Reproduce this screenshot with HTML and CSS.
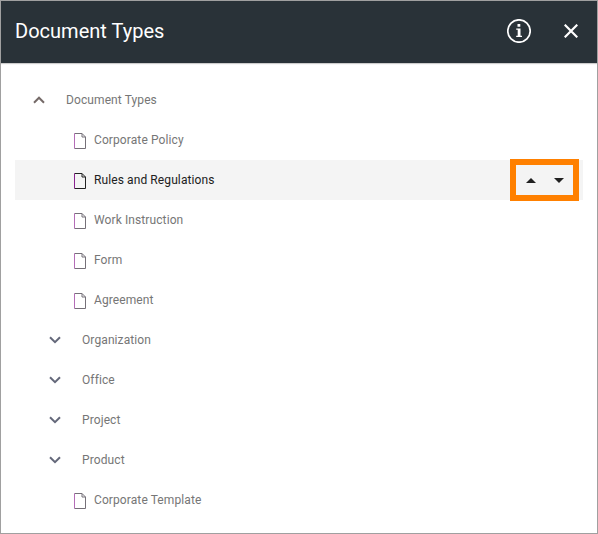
FILE: index.html
```html
<!DOCTYPE html>
<html lang="en">
<head>
<meta charset="utf-8">
<title>Document Types</title>
<link rel="stylesheet" href="styles.css">
</head>
<body>
<svg class="defs" aria-hidden="true">
  <symbol id="file" viewBox="0 0 12 16"><path d="M.5 .5H8L11.500 4V15.500H.5M8 .5V4H11.500"/><path class="spine" d="M.5 .5V15.500"/></symbol>
  <symbol id="down" viewBox="0 0 12 8"><path d="M1 1.200L6 6.200L11 1.200"/></symbol>
  <symbol id="up" viewBox="0 0 12 8"><path d="M1 6.700L6 1.700L11 6.700"/></symbol>
</svg>
<div class="dialog">
  <header class="header">
    <h1 class="title">Document Types</h1>
    <button class="icon-button info" aria-label="Information">
      <svg width="24" height="24" viewBox="0 0 24 24"><circle cx="12" cy="12" r="11.200" fill="none" stroke="#fff" stroke-width="1.700"/><path d="M10.500 5H13.300V7.700H10.500ZM9.200 9.500H13.500V16.800H15V18H9.200V16.800H10.700V10.700H9.200Z" fill="#fff"/></svg>
    </button>
    <button class="icon-button" aria-label="Close">
      <svg width="14" height="14" viewBox="0 0 14 14"><path d="M.7 .7L13.300 13.300M13.300 .7L.7 13.300" stroke="#fff" stroke-width="2.200"/></svg>
    </button>
  </header>
  <main class="tree">
    <div class="row root"><svg class="chevron open"><use href="#up"/></svg><span>Document Types</span></div>
    <div class="row leaf"><svg class="file"><use href="#file"/></svg><span>Corporate Policy</span></div>
    <div class="row leaf selected"><svg class="file"><use href="#file"/></svg><span>Rules and Regulations</span>
      <div class="move">
        <svg width="10" height="5" viewBox="0 0 10 5"><path d="M0 5L5 0L10 5Z"/></svg>
        <svg width="10" height="5" viewBox="0 0 10 5"><path d="M0 0H10L5 5Z"/></svg>
      </div>
    </div>
    <div class="row leaf"><svg class="file"><use href="#file"/></svg><span>Work Instruction</span></div>
    <div class="row leaf"><svg class="file"><use href="#file"/></svg><span>Form</span></div>
    <div class="row leaf"><svg class="file"><use href="#file"/></svg><span>Agreement</span></div>
    <div class="row branch"><svg class="chevron"><use href="#down"/></svg><span>Organization</span></div>
    <div class="row branch"><svg class="chevron"><use href="#down"/></svg><span>Office</span></div>
    <div class="row branch"><svg class="chevron"><use href="#down"/></svg><span>Project</span></div>
    <div class="row branch"><svg class="chevron"><use href="#down"/></svg><span>Product</span></div>
    <div class="row leaf"><svg class="file"><use href="#file"/></svg><span>Corporate Template</span></div>
  </main>
</div>
</body>
</html>
```
FILE: styles.css
```css
* { box-sizing: border-box; }
body { margin: 0; font-family: Roboto, "Liberation Sans", sans-serif; }
.defs { display: none; }
.dialog { height: 534px; border: 1px solid #a0a0a0; background: #fff; overflow: hidden; }
.header { display: flex; align-items: center; height: 62px; padding: 0 19px 2px 14px; background: #293238; box-shadow: 0 1px 1px rgba(0, 0, 0, .2); }
.title { flex: 1; margin: 0; font-size: 20px; font-weight: 400; line-height: 24px; letter-spacing: .02px; color: #fff; }
.icon-button { display: block; padding: 0; border: 0; background: none; line-height: 0; }
.icon-button svg { display: block; }
.info { margin-right: 33px; }
.tree { padding: 17px 14px 0; }
.row { display: flex; align-items: center; height: 40px; font-size: 12px; line-height: 16px; letter-spacing: .1px; color: #767676; --spine: #b56cb8; }
.root { padding-left: 18px; }
.branch { padding-left: 34px; }
.leaf { padding-left: 59px; }
.chevron { width: 12px; height: 8px; fill: none; stroke: #64687a; stroke-width: 2; }
.chevron.open { stroke: #756a68; }
.chevron + span { margin-left: 21px; }
.file { width: 12px; height: 16px; margin: 2px 8px 0 0; fill: none; stroke: #757078; stroke-width: 1; }
.spine { stroke: var(--spine); }
.selected { color: #212121; background: #f4f4f4; --spine: #8a2090; }
.selected .file { stroke: #212121; }
.move { display: flex; align-items: center; justify-content: center; gap: 18px; width: 69px; height: 42px; margin: -1px 4px -1px auto; border: 6px solid #ff8000; fill: #212121; }
```
